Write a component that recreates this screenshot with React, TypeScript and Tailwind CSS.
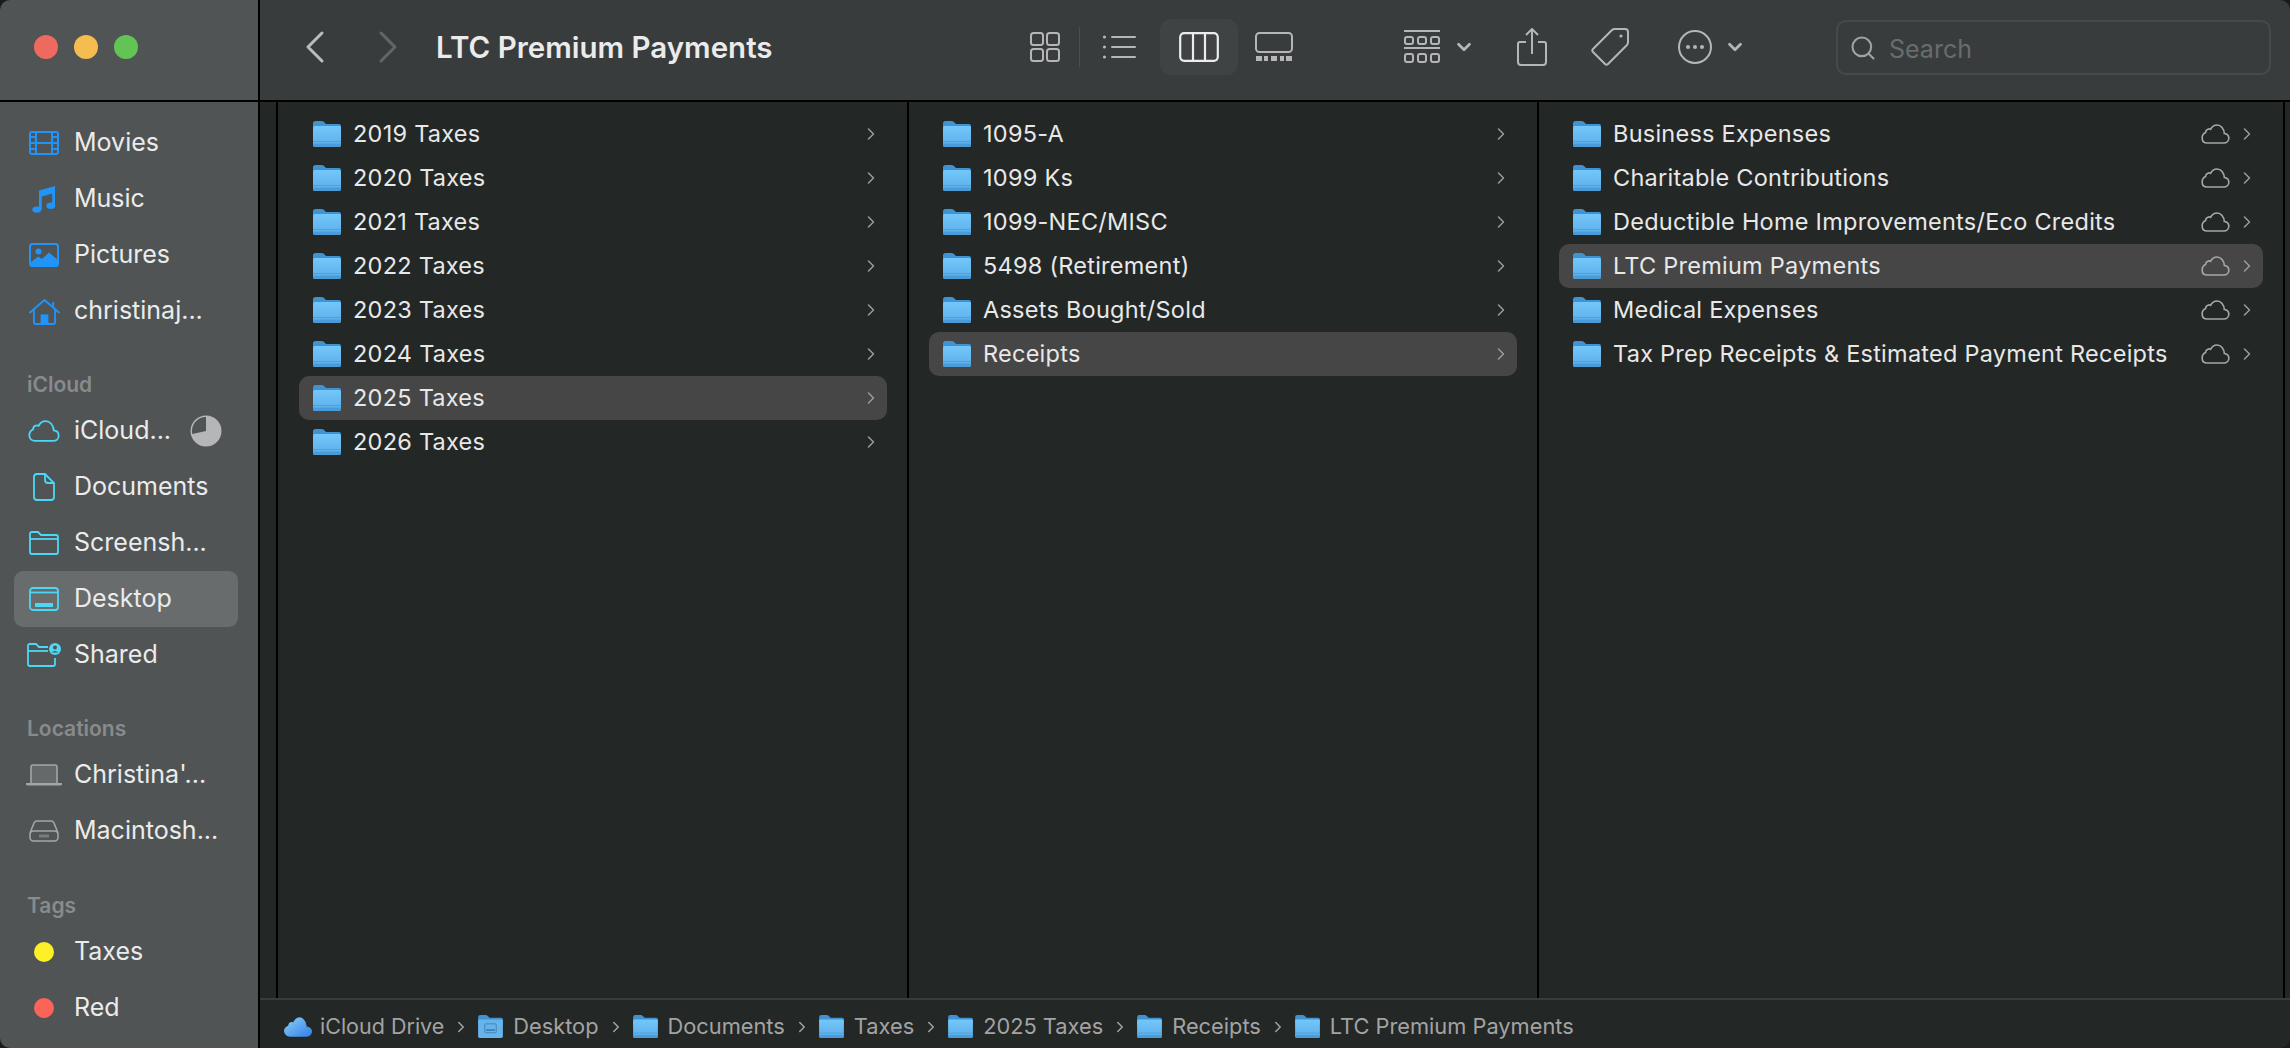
import React from 'react';
import { ChevronLeft, ChevronRight, ChevronDown, Search } from 'lucide-react';

const Folder = ({ className = 'w-[28px] h-[26px]' }: { className?: string }) => (
  <svg viewBox="0 0 28 26" className={`shrink-0 ${className}`}>
    <defs>
      <linearGradient id="fb" x1="0" y1="0" x2="0" y2="1">
        <stop offset="0" stopColor="#74c7f8" />
        <stop offset="1" stopColor="#5aaeea" />
      </linearGradient>
    </defs>
    <path d="M0 2.5Q0 0 2.5 0H8.5Q10 0 11 1L13 3H26Q28 3 28 5V12H0Z" fill="#3f93d3" />
    <path d="M0 6.5Q0 5 1.5 5H26.5Q28 5 28 6.5V24Q28 26 26 26H2Q0 26 0 24Z" fill="url(#fb)" />
    <rect x="0" y="20" width="28" height="1" fill="#4f9fdc" />
    <path d="M0 22.5H28V24Q28 26 26 26H2Q0 26 0 24Z" fill="#4b9bd9" />
  </svg>
);

const DesktopFolder = () => (
  <svg viewBox="0 0 28 26" className="w-[25px] h-[23px] shrink-0">
    <path d="M0 2.5Q0 0 2.5 0H8.5Q10 0 11 1L13 3H26Q28 3 28 5V12H0Z" fill="#3f93d3" />
    <path d="M0 6.5Q0 5 1.5 5H26.5Q28 5 28 6.5V24Q28 26 26 26H2Q0 26 0 24Z" fill="#66b4ea" />
    <rect x="7.5" y="10" width="13" height="10" rx="1" fill="none" stroke="#3f7fb5" strokeWidth="1" />
    <rect x="9" y="16" width="10" height="2" fill="#3f7fb5" />
  </svg>
);

const Cloud = ({ className, color, width = 1.6 }: { className: string; color: string; width?: number }) => (
  <svg viewBox="0 0 30 21" className={`shrink-0 ${className}`} fill="none" stroke={color} strokeWidth={width}>
    <path d="M6.5 20H23.5C26.8 20 29 17.9 29 15C29 12.3 27.1 10.3 24.3 10C24 5 20.7 1 16.6 1C13.4 1 11.1 3 9.8 5.6C8.8 5 7.8 5 6.9 5.4C5.4 6 4.6 7.4 4.6 9C2.4 10 1 12.1 1 14.6C1 17.9 3.3 20 6.5 20Z" />
  </svg>
);

const MoviesIcon = () => (
  <svg viewBox="0 0 30 24" className="w-[30px] h-[24px]" fill="none" stroke="#2094f8" strokeWidth="2">
    <rect x="1" y="1" width="28" height="22" rx="2" />
    <path d="M7 1V23M23 1V23M7 12H23M1 6H7M1 12H7M1 18H7M23 6H29M23 12H29M23 18H29" />
  </svg>
);

const MusicIcon = () => (
  <svg viewBox="0 0 24 28" className="w-[24px] h-[28px]">
    <path d="M7 5.5L23 1V21H20.2V8.5L9.8 11.4V25H7Z" fill="#2094f8" />
    <ellipse cx="4.8" cy="24.6" rx="4.4" ry="3.2" fill="#2094f8" />
    <ellipse cx="18.8" cy="20.8" rx="4.4" ry="3.2" fill="#2094f8" />
  </svg>
);

const PicturesIcon = () => (
  <svg viewBox="0 0 30 24" className="w-[30px] h-[24px]">
    <rect x="1" y="1" width="28" height="22" rx="2.5" fill="none" stroke="#2094f8" strokeWidth="2" />
    <circle cx="9.5" cy="8.5" r="3" fill="#2094f8" />
    <path d="M1 20L9 13.5L13 16L20 9.5L29 17V21Q29 24 26 24H4Q1 24 1 21Z" fill="#2094f8" />
  </svg>
);

const HomeIcon = () => (
  <svg viewBox="0 0 32 28" className="w-[31px] h-[27px]" fill="none" stroke="#2094f8" strokeWidth="2">
    <path d="M1 15L16 2L31 15" strokeLinecap="round" />
    <path d="M5 12V25Q5 27 7 27H25Q27 27 27 25V12" />
    <rect x="12" y="17" width="8" height="10" fill="#2094f8" stroke="none" />
    <path d="M25 9V4" />
  </svg>
);

const IcloudIcon = () => <Cloud className="w-[32px] h-[22px]" color="#4cd8f4" width={1.7} />;

const DocIcon = () => (
  <svg viewBox="0 0 22 28" className="w-[22px] h-[28px]" fill="none" stroke="#4cd8f4" strokeWidth="1.8">
    <path d="M4 1H12L21 10V24Q21 27 18 27H4Q1 27 1 24V4Q1 1 4 1Z" />
    <path d="M12 1V7Q12 10 15 10H21" />
  </svg>
);

const FolderOutline = () => (
  <svg viewBox="0 0 30 24" className="w-[30px] h-[24px]" fill="none" stroke="#4cd8f4" strokeWidth="1.8">
    <path d="M1 21V3Q1 1 3 1H9L12 4H27Q29 4 29 6V21Q29 23 27 23H3Q1 23 1 21Z" />
    <path d="M1 8H29" />
  </svg>
);

const DesktopIcon = () => (
  <svg viewBox="0 0 30 24" className="w-[30px] h-[24px]" fill="none" stroke="#4cd8f4" strokeWidth="1.8">
    <rect x="1" y="1" width="28" height="22" rx="3" />
    <path d="M1 5.5H29" />
    <rect x="6" y="16" width="18" height="4" fill="#4cd8f4" stroke="none" />
  </svg>
);

const SharedIcon = () => (
  <svg viewBox="0 0 34 24" className="w-[34px] h-[24px]" fill="none" stroke="#4cd8f4" strokeWidth="1.8">
    <path d="M28 15V21Q28 23 26 23H3Q1 23 1 21V3Q1 1 3 1H9L12 4H21" />
    <path d="M1 8H21" />
    <circle cx="28" cy="6" r="6" fill="#4cd8f4" stroke="none" />
    <circle cx="28" cy="4.4" r="2" fill="#505455" stroke="none" />
    <path d="M24.5 9.5Q28 6.4 31.5 9.5Z" fill="#505455" stroke="none" />
  </svg>
);

const LaptopIcon = () => (
  <svg viewBox="0 0 36 22" className="w-[36px] h-[22px]">
    <path d="M5 19V3Q5 1 7 1H29Q31 1 31 3V19" fill="#66696a" stroke="#a3a6a7" strokeWidth="1.6" />
    <path d="M0 19H36V20Q36 21.5 34 21.5H2Q0 21.5 0 20Z" fill="#a3a6a7" />
  </svg>
);

const DriveIcon = () => (
  <svg viewBox="0 0 30 22" className="w-[30px] h-[22px]" fill="none" stroke="#a3a6a7" strokeWidth="1.6">
    <path d="M1 13L5 3Q6 1 8 1H22Q24 1 25 3L29 13" />
    <rect x="1" y="11" width="28" height="10" rx="3.5" />
    <path d="M11 14.5V17.5M13 14.5V17.5M15 14.5V17.5M17 14.5V17.5M19 14.5V17.5" strokeWidth="1" />
  </svg>
);

const Pie = () => (
  <svg viewBox="0 0 32 32" className="w-[32px] h-[32px] shrink-0">
    <circle cx="16" cy="16" r="15.5" fill="#b4b6b7" />
    <path d="M16 16V2A14 14 0 0 0 2.3 19Z" fill="#505455" />
  </svg>
);

const SideRow = ({ icon, label, selected, extra }: { icon: React.ReactNode; label: string; selected?: boolean; extra?: React.ReactNode }) => (
  <div className={`h-[56px] ml-[14px] mr-[20px] flex items-center rounded-[9px] ${selected ? 'bg-[#696c6d]' : ''}`}>
    <div className="w-[60px] shrink-0 flex justify-center pl-[1px] pr-[1px]">{icon}</div>
    <span className="text-[25px] text-[#ebebeb] whitespace-nowrap">{label}</span>
    {extra && <div className="ml-auto mr-[16px]">{extra}</div>}
  </div>
);

const SideHead = ({ label, className }: { label: string; className: string }) => (
  <div className={`pl-[27px] text-[21px] font-semibold text-[#888b8c] leading-[28px] ${className}`}>{label}</div>
);

const ToolBtn = ({ children, className = '' }: { children: React.ReactNode; className?: string }) => (
  <div className={`flex items-center justify-center shrink-0 ${className}`}>{children}</div>
);

const Toolbar = () => (
  <div className="h-[102px] shrink-0 bg-[#393c3d] border-b-2 border-black flex items-center pb-[6px]">
    <ChevronLeft size={56} strokeWidth={1.3} className="text-[#b9bbbc] ml-[27px] shrink-0" />
    <ChevronRight size={56} strokeWidth={1.3} className="text-[#636667] ml-[17px] shrink-0" />
    <span className="ml-[20px] w-[594px] shrink-0 text-[29.5px] font-semibold text-[#ebebeb] whitespace-nowrap">LTC Premium Payments</span>

    <svg viewBox="0 0 30 30" className="w-[30px] h-[30px] shrink-0" fill="none" stroke="#b4b6b7" strokeWidth="2">
      <rect x="1" y="1" width="12" height="12" rx="2.5" />
      <rect x="17" y="1" width="12" height="12" rx="2.5" />
      <rect x="1" y="17" width="12" height="12" rx="2.5" />
      <rect x="17" y="17" width="12" height="12" rx="2.5" />
    </svg>
    <div className="w-[1px] h-[40px] bg-[#4b4e4f] ml-[19px] shrink-0" />
    <svg viewBox="0 0 34 26" className="w-[34px] h-[26px] ml-[22px] shrink-0" fill="none" stroke="#b4b6b7" strokeWidth="2" strokeLinecap="round">
      <path d="M10 3H33M10 13H33M10 23H33" />
      <circle cx="2.5" cy="3" r="1.6" fill="#b4b6b7" stroke="none" />
      <circle cx="2.5" cy="13" r="1.6" fill="#b4b6b7" stroke="none" />
      <circle cx="2.5" cy="23" r="1.6" fill="#b4b6b7" stroke="none" />
    </svg>
    <ToolBtn className="w-[78px] h-[56px] ml-[24px] rounded-[11px] bg-[#404344]">
      <svg viewBox="0 0 40 30" className="w-[40px] h-[30px]" fill="none" stroke="#ececec" strokeWidth="2.2">
        <rect x="1.2" y="1.2" width="37.6" height="27.6" rx="4" />
        <path d="M14 1V29M26 1V29" />
      </svg>
    </ToolBtn>
    <svg viewBox="0 0 38 30" className="w-[38px] h-[30px] ml-[17px] shrink-0" fill="none" stroke="#b4b6b7" strokeWidth="2">
      <rect x="1" y="1" width="36" height="19" rx="3.5" />
      <path d="M1 26.5H7M9 26.5H13M16 26.5H22M25 26.5H29M31 26.5H37" strokeWidth="5" />
    </svg>

    <svg viewBox="0 0 36 35" className="w-[36px] h-[35px] ml-[111px] shrink-0" fill="none" stroke="#b4b6b7" strokeWidth="2">
      <path d="M0 1H36M0 18H36" />
      <rect x="1" y="7" width="8" height="7" rx="2" />
      <rect x="14" y="7" width="8" height="7" rx="2" />
      <rect x="27" y="7" width="8" height="7" rx="2" />
      <rect x="1" y="24" width="8" height="8" rx="2" />
      <rect x="14" y="24" width="8" height="8" rx="2" />
      <rect x="27" y="24" width="8" height="8" rx="2" />
    </svg>
    <ChevronDown size={22} strokeWidth={3} className="text-[#b4b6b7] ml-[13px] shrink-0" />

    <svg viewBox="0 0 30 38" className="w-[30px] h-[38px] ml-[42px] shrink-0" fill="none" stroke="#b4b6b7" strokeWidth="2">
      <path d="M9 14H3Q1 14 1 16V34Q1 37 4 37H26Q29 37 29 34V16Q29 14 27 14H21" />
      <path d="M15 26V2M9 7L15 1L21 7" />
    </svg>

    <svg viewBox="0 0 38 38" className="w-[38px] h-[38px] ml-[44px] shrink-0" fill="none" stroke="#b4b6b7" strokeWidth="2">
      <path d="M24 1H34Q37 1 37 4V14Q37 16 36 17L17 36Q15.5 37.5 14 36L2 24Q0.5 22.5 2 21L21 2Q22 1 24 1Z" />
      <circle cx="30" cy="8" r="1.6" fill="#b4b6b7" stroke="none" />
    </svg>

    <svg viewBox="0 0 34 34" className="w-[34px] h-[34px] ml-[49px] shrink-0" fill="none" stroke="#b4b6b7" strokeWidth="2">
      <circle cx="17" cy="17" r="16" />
      <circle cx="10" cy="17" r="2" fill="#b4b6b7" stroke="none" />
      <circle cx="17" cy="17" r="2" fill="#b4b6b7" stroke="none" />
      <circle cx="24" cy="17" r="2" fill="#b4b6b7" stroke="none" />
    </svg>
    <ChevronDown size={22} strokeWidth={3} className="text-[#b4b6b7] ml-[12px] shrink-0" />

    <div className="ml-[90px] w-[435px] h-[55px] shrink-0 rounded-[10px] border-2 border-[#464a4b] flex items-center pl-[11px] pt-[2px]">
      <Search size={28} strokeWidth={1.8} className="text-[#a0a2a3] shrink-0" />
      <span className="ml-[12px] pt-[3px] text-[25px] text-[#696c6d]">Search</span>
    </div>
  </div>
);

const ColRow = ({ label, selected, cloud }: { label: string; selected?: boolean; cloud?: boolean }) => (
  <div className={`h-[44px] flex items-center pl-[14px] pr-[6px] rounded-[10px] ${selected ? 'bg-[#464646]' : ''}`}>
    <Folder />
    <span className="ml-[12px] text-[23.5px] tracking-[0.25px] text-[#e8e8e8] whitespace-nowrap">{label}</span>
    {cloud && <Cloud className="ml-auto w-[29px] h-[20px]" color="#a6a8a8" width={1.7} />}
    <ChevronRight size={20} strokeWidth={1.8} className={`text-[#9a9c9c] ${cloud ? 'ml-[7px]' : 'ml-auto'}`} />
  </div>
);

const Column = ({ items, selected, width, cloud }: { items: string[]; selected: string; width: string; cloud?: boolean }) => (
  <div className={`${width} shrink-0 border-r-2 border-black pt-[10px]`}>
    {items.map((t) => (
      <ColRow key={t} label={t} selected={t === selected} cloud={cloud} />
    ))}
  </div>
);

const Crumb = ({ icon, label, last }: { icon: React.ReactNode; label: string; last?: boolean }) => (
  <>
    {icon}
    <span className="ml-[10px] text-[21.8px] text-[#a3a3a3] whitespace-nowrap">{label}</span>
    {!last && <ChevronRight size={18} strokeWidth={2} className="text-[#a3a3a3] mx-[8px] shrink-0" />}
  </>
);

const smallFolder = <Folder className="w-[25px] h-[23px]" />;

export default function App() {
  return (
    <div className="w-[2290px] h-[1048px] flex overflow-hidden bg-[#1a1c1c] font-['Inter','Liberation_Sans',sans-serif]">
      <div className="w-[260px] shrink-0 bg-[#505455] border-r-2 border-black flex flex-col rounded-l-[10px]">
        <div className="h-[102px] shrink-0 border-b-2 border-black flex items-center gap-[16px] pl-[34px] pb-[6px]">
          <div className="w-[24px] h-[24px] rounded-full bg-[#ee6a5f]" />
          <div className="w-[24px] h-[24px] rounded-full bg-[#f5bd4f]" />
          <div className="w-[24px] h-[24px] rounded-full bg-[#61c454]" />
        </div>
        <div className="pt-[13px]">
          <SideRow icon={<MoviesIcon />} label="Movies" />
          <SideRow icon={<MusicIcon />} label="Music" />
          <SideRow icon={<PicturesIcon />} label="Pictures" />
          <SideRow icon={<HomeIcon />} label="christinaj..." />
          <SideHead label="iCloud" className="mt-[32px] mb-[4px]" />
          <SideRow icon={<IcloudIcon />} label="iCloud..." extra={<Pie />} />
          <SideRow icon={<DocIcon />} label="Documents" />
          <SideRow icon={<FolderOutline />} label="Screensh..." />
          <SideRow icon={<DesktopIcon />} label="Desktop" selected />
          <SideRow icon={<SharedIcon />} label="Shared" />
          <SideHead label="Locations" className="mt-[32px] mb-[4px]" />
          <SideRow icon={<LaptopIcon />} label="Christina'..." />
          <SideRow icon={<DriveIcon />} label="Macintosh..." />
          <SideHead label="Tags" className="mt-[33px] mb-[4px]" />
          <SideRow icon={<div className="w-[20px] h-[20px] rounded-full bg-[#fdf026]" />} label="Taxes" />
          <SideRow icon={<div className="w-[20px] h-[20px] rounded-full bg-[#fb6459]" />} label="Red" />
        </div>
      </div>

      <div className="flex-1 min-w-0 flex flex-col rounded-r-[10px] overflow-hidden">
        <Toolbar />
        <div className="flex-1 min-h-0 flex bg-[#232726]">
          <div className="w-[18px] shrink-0 border-r-2 border-black" />
          <Column
            width="w-[631px] pl-[21px] pr-[20px]"
            selected="2025 Taxes"
            items={['2019 Taxes', '2020 Taxes', '2021 Taxes', '2022 Taxes', '2023 Taxes', '2024 Taxes', '2025 Taxes', '2026 Taxes']}
          />
          <Column
            width="w-[630px] px-[20px]"
            selected="Receipts"
            items={['1095-A', '1099 Ks', '1099-NEC/MISC', '5498 (Retirement)', 'Assets Bought/Sold', 'Receipts']}
          />
          <Column
            width="w-[746px] px-[20px]"
            cloud
            selected="LTC Premium Payments"
            items={['Business Expenses', 'Charitable Contributions', 'Deductible Home Improvements/Eco Credits', 'LTC Premium Payments', 'Medical Expenses', 'Tax Prep Receipts & Estimated Payment Receipts']}
          />
        </div>
        <div className="h-[50px] shrink-0 bg-[#232726] border-t-2 border-[#3a3d3d] flex items-center pl-[24px] pt-[5px]">
          <svg viewBox="0 0 30 21" className="w-[28px] h-[20px] shrink-0">
            <defs>
              <linearGradient id="cg" x1="0" y1="0" x2="1" y2="1">
                <stop offset="0" stopColor="#8ed0f8" />
                <stop offset="1" stopColor="#2f7fe8" />
              </linearGradient>
            </defs>
            <path d="M6.5 21H23.5C26.8 21 30 18.9 30 15C30 12.3 27.1 10.3 24.3 10C24 5 20.7 0 16.6 0C13.4 0 11.1 3 9.8 5.6C8.8 5 7.8 5 6.9 5.4C5.4 6 4.6 7.4 4.6 9C2.4 10 0 12.1 0 14.6C0 17.9 3.3 21 6.5 21Z" fill="url(#cg)" />
          </svg>
          <span className="ml-[8px] text-[21.5px] text-[#a3a3a3] whitespace-nowrap">iCloud Drive</span>
          <ChevronRight size={18} strokeWidth={2} className="text-[#a3a3a3] mx-[8px] shrink-0" />
          <Crumb icon={<DesktopFolder />} label="Desktop" />
          <Crumb icon={smallFolder} label="Documents" />
          <Crumb icon={smallFolder} label="Taxes" />
          <Crumb icon={smallFolder} label="2025 Taxes" />
          <Crumb icon={smallFolder} label="Receipts" />
          <Crumb icon={smallFolder} label="LTC Premium Payments" last />
        </div>
      </div>
    </div>
  );
}
